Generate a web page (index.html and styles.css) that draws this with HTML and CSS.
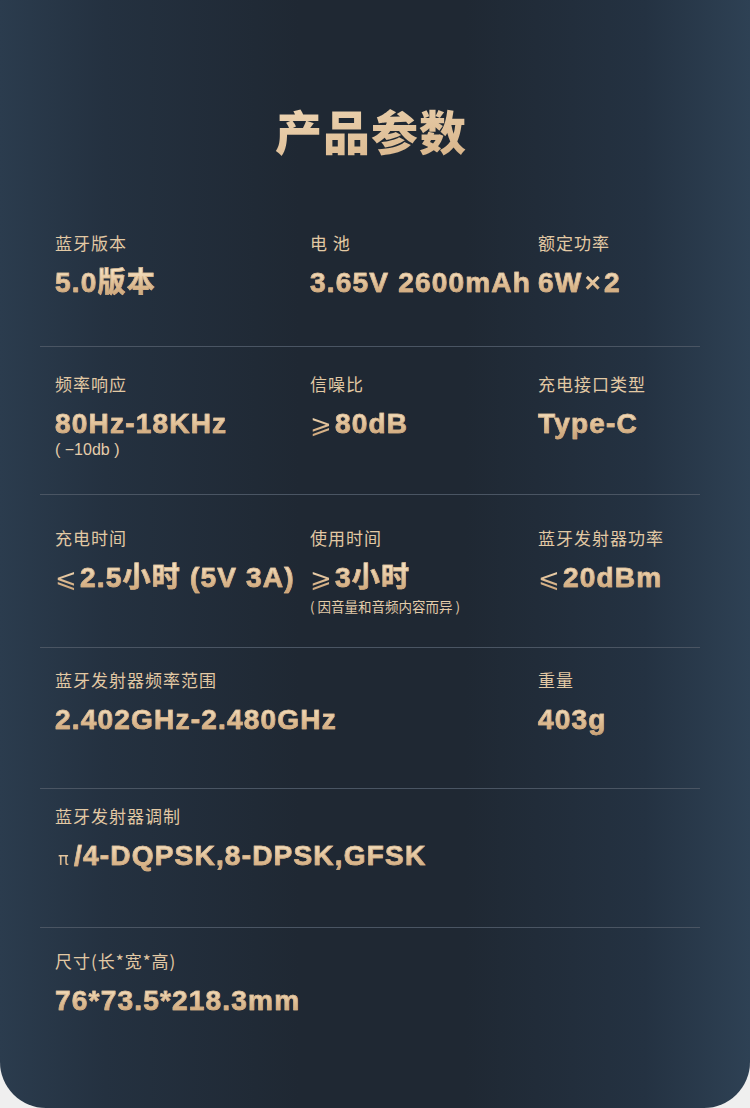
FILE: index.html
```html
<!DOCTYPE html>
<html lang="zh-CN">
<head>
<meta charset="utf-8">
<title>产品参数</title>
<link rel="stylesheet" href="styles.css">
</head>
<body>
<div class="page">
  <h1 class="title">产品参数</h1>
  <div class="specs">
    <div class="row row-1">
      <div class="cell"><div class="label">蓝牙版本</div><div class="value">5.0版本</div></div>
      <div class="cell"><div class="label">电 池</div><div class="value">3.65V 2600mAh</div></div>
      <div class="cell"><div class="label">额定功率</div><div class="value">6W<span class="times">×</span>2</div></div>
    </div>
    <div class="row row-2">
      <div class="cell"><div class="label">频率响应</div><div class="value">80Hz-18KHz</div><div class="note">( −10db )</div></div>
      <div class="cell"><div class="label">信噪比</div><div class="value"><span class="sym">⩾</span>80dB</div></div>
      <div class="cell"><div class="label">充电接口类型</div><div class="value">Type-C</div></div>
    </div>
    <div class="row row-3">
      <div class="cell"><div class="label">充电时间</div><div class="value"><span class="sym">⩽</span>2.5小时 (5V 3A)</div></div>
      <div class="cell"><div class="label">使用时间</div><div class="value"><span class="sym">⩾</span>3小时</div><div class="note note-cn">( 因音量和音频内容而异 )</div></div>
      <div class="cell"><div class="label">蓝牙发射器功率</div><div class="value"><span class="sym">⩽</span>20dBm</div></div>
    </div>
    <div class="row row-4">
      <div class="cell wide"><div class="label">蓝牙发射器频率范围</div><div class="value">2.402GHz-2.480GHz</div></div>
      <div class="cell"><div class="label">重量</div><div class="value">403g</div></div>
    </div>
    <div class="row row-5">
      <div class="cell full"><div class="label">蓝牙发射器调制</div><div class="value"><span class="pi">π</span>/4-DQPSK,8-DPSK,GFSK</div></div>
    </div>
    <div class="row row-6">
      <div class="cell full"><div class="label">尺寸(长*宽*高)</div><div class="value">76*73.5*218.3mm</div></div>
    </div>
  </div>
</div>
</body>
</html>
```

FILE: styles.css
```css
html, body {
  margin: 0;
  padding: 0;
  background: #efefef;
}
.page {
  width: 750px;
  height: 1108px;
  box-sizing: border-box;
  padding-top: 100px;
  background: linear-gradient(90deg, #2b3c4e 0%, #243140 14%, #1f2833 40%, #1f2833 62%, #243242 86%, #2e4154 100%);
  border-radius: 0 0 46px 46px;
  overflow: hidden;
  font-family: "Liberation Sans", "Noto Sans CJK SC", sans-serif;
}
.title {
  margin: 0;
  text-align: center;
  font-family: "Noto Sans CJK SC", sans-serif;
  font-weight: 900;
  font-size: 47px;
  line-height: 60px;
  letter-spacing: 1px;
  padding-right: 8px;
  background: linear-gradient(170deg, #f2dcbc 20%, #d9b68c 70%, #c9a075 100%);
  -webkit-background-clip: text;
  background-clip: text;
  color: transparent;
}
.specs {
  margin: 71px 50px 0 40px;
}
.row {
  display: grid;
  grid-template-columns: 255px 228px 1fr;
  padding-left: 15px;
  border-bottom: 1px solid #4a5563;
}
.row-1 { padding-top: 0; padding-bottom: 46px; }
.row-2 { padding-top: 25px; padding-bottom: 35px; }
.row-3 { padding-top: 31px; padding-bottom: 32px; }
.row-4 { padding-top: 20px; padding-bottom: 51px; }
.row-5 { padding-top: 15px; padding-bottom: 51px; }
.row-6 { padding-top: 21px; border-bottom: none; }
.wide { grid-column: span 2; }
.full { grid-column: 1 / -1; }
.label {
  font-family: "Noto Sans CJK SC", sans-serif;
  font-size: 17px;
  line-height: 24px;
  color: #e2c9a4;
  letter-spacing: 1px;
}
.value {
  margin-top: 11px;
  font-family: "Liberation Sans", "Noto Sans CJK SC", sans-serif;
  font-weight: 700;
  font-size: 28px;
  line-height: 34px;
  letter-spacing: 1.2px;
  white-space: nowrap;
  background: linear-gradient(180deg, #f4dfbf 15%, #dcb98f 60%, #c79d71 100%);
  -webkit-background-clip: text;
  background-clip: text;
  color: transparent;
  -webkit-text-stroke: 0.6px #d6b287;
  width: max-content;
}
.value .times {
  font-weight: 700;
  margin: 0 2px;
  -webkit-text-stroke: 0;
}
.value .sym {
  font-family: "DejaVu Sans", sans-serif;
  font-weight: 400;
  font-size: 26px;
  margin-right: 2px;
  -webkit-text-stroke: 0;
}
.value .pi {
  font-family: "DejaVu Sans", sans-serif;
  font-weight: 400;
  font-size: 18px;
  margin: 0 4px 0 3px;
  -webkit-text-stroke: 0;
}
.note {
  margin-top: 0;
  font-family: "Liberation Sans", sans-serif;
  font-size: 16px;
  line-height: 18px;
  color: #e4ccaa;
}
.note-cn {
  margin-top: 2px;
  font-family: "Noto Sans CJK SC", sans-serif;
  font-size: 13.5px;
}
```
